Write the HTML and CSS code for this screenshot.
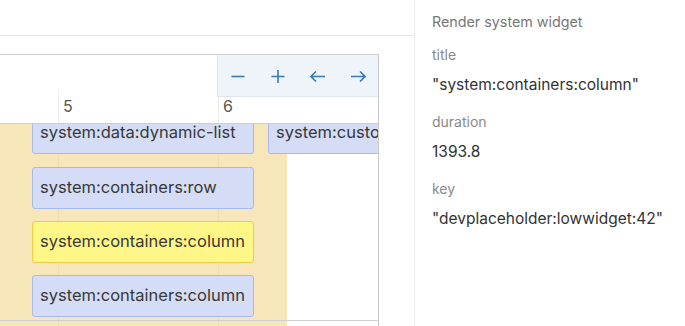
FILE: index.html
```html
<!DOCTYPE html>
<html lang="en">
<head>
    <meta charset="UTF-8">
    <meta name="viewport" content="width=device-width, initial-scale=1.0">
    <title>Render profiler</title>
    <link rel="stylesheet" href="styles.css">
</head>
<body>
    <div class="layout">
        <main class="main">
            <div class="topbar"></div>
            <div class="chart">
                <div class="chart-head">
                    <div class="axis">
                        <div class="tick" style="left: 58px">5</div>
                        <div class="tick" style="left: 218px">6</div>
                    </div>
                    <div class="toolbar">
                        <button class="tool" title="Zoom out">
                            <svg width="16" height="16" viewBox="0 0 16 16"><path d="M1.5 8.5h13"/></svg>
                        </button>
                        <button class="tool" title="Zoom in">
                            <svg width="16" height="16" viewBox="0 0 16 16"><path d="M1.5 8.5h13M8 2v13"/></svg>
                        </button>
                        <button class="tool" title="Back">
                            <svg width="16" height="16" viewBox="0 0 16 16"><path d="M1 8.5h14M6 3.5l-5 5 5 5"/></svg>
                        </button>
                        <button class="tool" title="Forward">
                            <svg width="16" height="16" viewBox="0 0 16 16"><path d="M1 8.5h14M10 3.5l5 5-5 5"/></svg>
                        </button>
                    </div>
                </div>
                <div class="plot">
                    <div class="range" style="left: 0; width: 287px"></div>
                    <div class="gridline" style="left: 58px"></div>
                    <div class="gridline" style="left: 218px"></div>
                    <div class="bar" style="left: 32px; top: -12px; width: 222px">system:data:dynamic-list</div>
                    <div class="bar" style="left: 268px; top: -12px; width: 200px">system:custom-widget</div>
                    <div class="bar" style="left: 32px; top: 43px; width: 222px">system:containers:row</div>
                    <div class="bar active" style="left: 32px; top: 97px; width: 222px">system:containers:column</div>
                    <div class="bar" style="left: 32px; top: 151px; width: 222px">system:containers:column</div>
                    <div class="plot-foot"></div>
                </div>
            </div>
        </main>
        <aside class="details">
            <div class="details-title">Render system widget</div>
            <div class="field">
                <div class="field-label">title</div>
                <div class="field-value">"system:containers:column"</div>
            </div>
            <div class="field">
                <div class="field-label">duration</div>
                <div class="field-value">1393.8</div>
            </div>
            <div class="field">
                <div class="field-label">key</div>
                <div class="field-value">"devplaceholder:lowwidget:42"</div>
            </div>
        </aside>
    </div>
</body>
</html>
```

FILE: styles.css
```css
body {
    margin: 0;
    font-family: Inter, "Noto Sans", sans-serif;
    background-color: #fff;
    color: #333;
    overflow: hidden;
}
.layout {
    display: flex;
    height: 100vh;
}
.main {
    width: 414px;
    border-right: 1px solid #eeeeee;
    overflow: hidden;
}
.topbar {
    height: 35px;
    border-bottom: 1px solid #e6e6e6;
    margin-bottom: 18px;
}
.chart {
    width: 378px;
    border-top: 1px solid #cfcfcf;
    border-right: 1px solid #c8c8c8;
}
.chart-head {
    position: relative;
    height: 68px;
    display: flex;
    flex-direction: column;
    justify-content: flex-end;
    border-bottom: 1px solid #cfcfcf;
}
.axis {
    position: relative;
    height: 34px;
}
.tick {
    position: absolute;
    top: 0;
    bottom: 0;
    padding-left: 4px;
    border-left: 1px solid #ececec;
    font-size: 16px;
    line-height: 34px;
    color: #555;
}
.toolbar {
    position: absolute;
    top: 0;
    right: 0;
    width: 160px;
    height: 41px;
    display: flex;
    background-color: #eef4f9;
    border-left: 1px solid #dde6ee;
    border-bottom: 1px solid #dde6ee;
}
.tool {
    width: 40px;
    border: none;
    padding: 0;
    background: none;
    display: flex;
    align-items: center;
    justify-content: center;
    cursor: pointer;
}
.tool svg {
    fill: none;
    stroke: #3a78b0;
    stroke-width: 1.6;
}
.tool:hover {
    background-color: #e1ebf4;
}
.plot {
    position: relative;
    height: 210px;
    overflow: hidden;
}
.range {
    position: absolute;
    top: 0;
    bottom: 0;
    background-color: #f7e6b9;
}
.gridline {
    position: absolute;
    top: 0;
    bottom: 0;
    width: 1px;
    background-color: rgba(200, 160, 60, 0.12);
}
.bar {
    position: absolute;
    box-sizing: border-box;
    height: 42px;
    padding: 0 7px;
    background-color: #d4ddf5;
    border: 1px solid #a8b9ee;
    border-radius: 3px;
    font-size: 16.5px;
    line-height: 38px;
    color: #383838;
    white-space: nowrap;
    overflow: hidden;
}
.bar.active {
    background-color: #fff688;
    border-color: #f6c940;
}
.plot-foot {
    position: absolute;
    left: 0;
    right: 0;
    top: 196px;
    border-top: 1px solid #cfcfcf;
}
.details {
    flex: 1;
    padding: 12px 17px;
}
.details-title {
    font-size: 14.3px;
    line-height: 20px;
    color: #777;
    margin-bottom: 10px;
}
.field {
    margin-bottom: 7px;
}
.field-label {
    font-size: 14px;
    line-height: 26px;
    color: #8a8a8a;
}
.field-value {
    font-size: 15.5px;
    line-height: 34px;
    color: #333;
}
```
